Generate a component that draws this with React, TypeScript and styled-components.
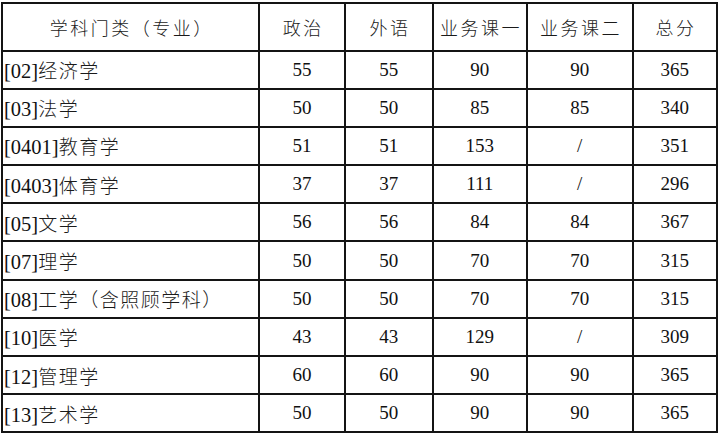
import React from 'react';
import styled, { createGlobalStyle } from 'styled-components';

const GlobalStyle = createGlobalStyle`
  html, body {
    margin: 0;
    padding: 0;
    background: #ffffff;
  }
`;

const Page = styled.div`
  padding: 2px 0 0 1px;
  font-family: "Liberation Serif", "Noto Sans CJK SC", serif;
  color: #111111;
`;

const Table = styled.table`
  border-collapse: collapse;
  table-layout: fixed;
  width: 715px;
`;

const HeadRow = styled.tr`
  height: 47.5px;
`;

const BodyRow = styled.tr`
  height: 38.2px;
`;

const HeadCell = styled.th`
  border: 2px solid #141414;
  padding: 0;
  font-family: "Noto Sans CJK SC", sans-serif;
  font-weight: 300;
  font-size: 18px;
  letter-spacing: 2.5px;
  text-indent: 2.5px;
  text-align: center;
  vertical-align: middle;
  color: #1a1a1a;
`;

const Cell = styled.td<{ $left?: boolean }>`
  border: 2px solid #141414;
  padding: ${p => (p.$left ? '0 0 0 1px' : '0')};
  font-size: 19px;
  text-align: ${p => (p.$left ? 'left' : 'center')};
  vertical-align: middle;
  white-space: nowrap;
`;

const Code = styled.span`
  font-family: "Liberation Serif", serif;
  font-size: 20.5px;
`;

const Name = styled.span`
  font-family: "Noto Sans CJK SC", sans-serif;
  font-weight: 300;
  font-size: 19px;
  letter-spacing: 1.5px;
  color: #1a1a1a;
`;

const columns = [257, 86, 87.5, 94.5, 105.5, 84.5];
const headers = ['学科门类（专业）', '政治', '外语', '业务课一', '业务课二', '总分'];

type Row = { code: string; name: string; scores: string[] };

const rows: Row[] = [
  { code: '[02]', name: '经济学', scores: ['55', '55', '90', '90', '365'] },
  { code: '[03]', name: '法学', scores: ['50', '50', '85', '85', '340'] },
  { code: '[0401]', name: '教育学', scores: ['51', '51', '153', '/', '351'] },
  { code: '[0403]', name: '体育学', scores: ['37', '37', '111', '/', '296'] },
  { code: '[05]', name: '文学', scores: ['56', '56', '84', '84', '367'] },
  { code: '[07]', name: '理学', scores: ['50', '50', '70', '70', '315'] },
  { code: '[08]', name: '工学（含照顾学科）', scores: ['50', '50', '70', '70', '315'] },
  { code: '[10]', name: '医学', scores: ['43', '43', '129', '/', '309'] },
  { code: '[12]', name: '管理学', scores: ['60', '60', '90', '90', '365'] },
  { code: '[13]', name: '艺术学', scores: ['50', '50', '90', '90', '365'] },
];

export default function App() {
  return (
    <>
      <GlobalStyle />
      <Page>
        <Table>
          <colgroup>
            {columns.map((w, i) => (
              <col key={i} style={{ width: w }} />
            ))}
          </colgroup>
          <thead>
            <HeadRow>
              {headers.map(h => (
                <HeadCell key={h}>{h}</HeadCell>
              ))}
            </HeadRow>
          </thead>
          <tbody>
            {rows.map(r => (
              <BodyRow key={r.code}>
                <Cell $left>
                  <Code>{r.code}</Code>
                  <Name>{r.name}</Name>
                </Cell>
                {r.scores.map((s, i) => (
                  <Cell key={i}>{s}</Cell>
                ))}
              </BodyRow>
            ))}
          </tbody>
        </Table>
      </Page>
    </>
  );
}
